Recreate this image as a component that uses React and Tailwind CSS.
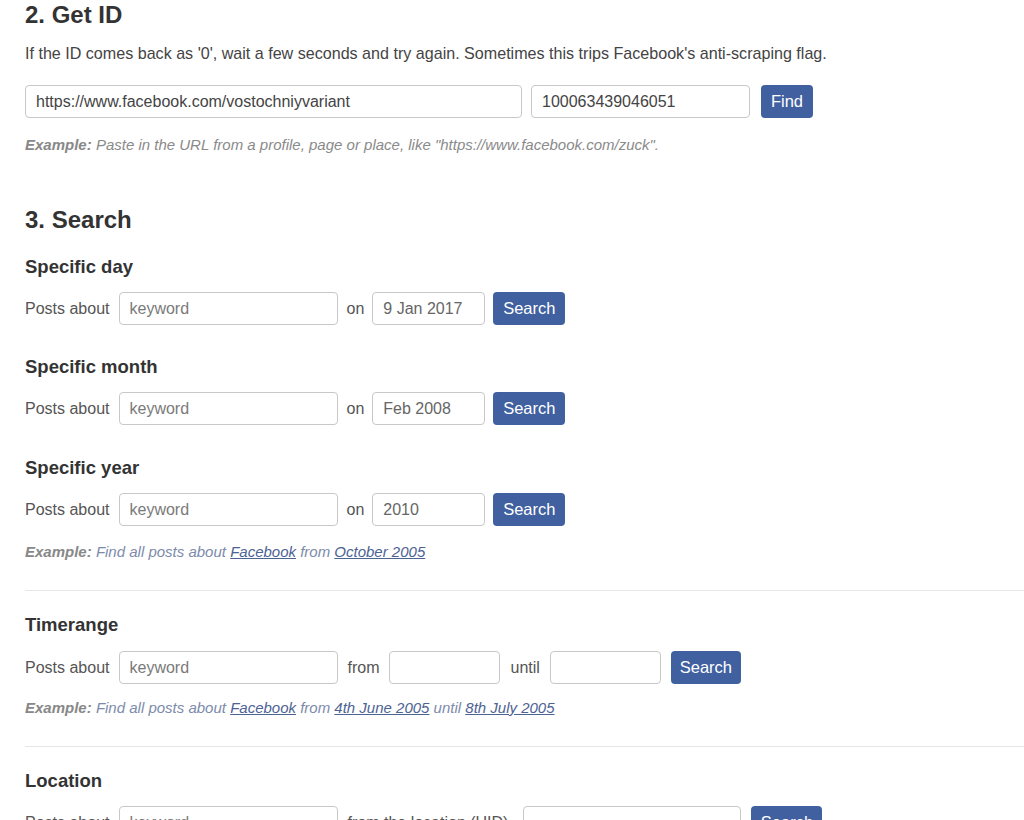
const font = { fontFamily: '"Liberation Sans", Arial, sans-serif' }

function Field({ value, placeholder, width, tone = 'text-[#444]' }) {
  return (
    <div
      className={`h-[33px] ${width} border border-[#c8c8c8] rounded-[4px] bg-white flex items-center px-[10px] text-[16px] ${
        value ? tone : 'text-[#7a7a7a]'
      }`}
    >
      {value || placeholder}
    </div>
  )
}

function Button({ label, width }) {
  return (
    <div
      className={`h-[33px] ${width} rounded-[4px] bg-[#41609f] text-white text-[16.5px] flex items-center justify-center`}
    >
      {label}
    </div>
  )
}

function Label({ children, className = '' }) {
  return <span className={`text-[16px] text-[#555] ${className}`}>{children}</span>
}

function SubHeading({ children, className = '' }) {
  return (
    <h4 className={`text-[18.5px] leading-[22px] font-bold text-[#333] ${className}`}>{children}</h4>
  )
}

function Link({ children }) {
  return <span className="underline text-[#4d6394]">{children}</span>
}

function Example({ children, className = '', tone = 'text-[#7d8bab]' }) {
  return (
    <p className={`text-[15px] leading-[20px] italic ${tone} ${className}`}>
      <span className="font-bold text-[#888]">Example:</span> {children}
    </p>
  )
}

function SearchRow({ dateValue, className = '' }) {
  return (
    <div className={`flex items-center ${className}`}>
      <Label>Posts about</Label>
      <div className="ml-[9px]">
        <Field placeholder="keyword" width="w-[219px]" />
      </div>
      <Label className="ml-[9px]">on</Label>
      <div className="ml-[8px]">
        <Field value={dateValue} width="w-[113px]" tone="text-[#666]" />
      </div>
      <div className="ml-[8px]">
        <Button label="Search" width="w-[72px]" />
      </div>
    </div>
  )
}

export default function App() {
  return (
    <div className="w-[1024px] h-[820px] overflow-hidden bg-white pl-[25px]" style={font}>
      <h2 className="text-[24px] leading-[29px] font-bold text-[#333]">2. Get ID</h2>
      <p className="mt-[14px] text-[16.1px] leading-[20px] text-[#444]">
        If the ID comes back as '0', wait a few seconds and try again. Sometimes this trips
        Facebook's anti-scraping flag.
      </p>
      <div className="mt-[22px] flex items-center">
        <Field value="https://www.facebook.com/vostochniyvariant" width="w-[497px]" />
        <div className="ml-[9px]">
          <Field value="100063439046051" width="w-[219px]" />
        </div>
        <div className="ml-[11px]">
          <Button label="Find" width="w-[52px]" />
        </div>
      </div>
      <Example className="mt-[17px]" tone="text-[#8a8a8a]">
        Paste in the URL from a profile, page or place, like "https://www.facebook.com/zuck".
      </Example>

      <h2 className="mt-[50px] text-[24px] leading-[29px] font-bold text-[#333]">3. Search</h2>

      <SubHeading className="mt-[22px]">Specific day</SubHeading>
      <SearchRow dateValue="9 Jan 2017" className="mt-[14px]" />

      <SubHeading className="mt-[31px]">Specific month</SubHeading>
      <SearchRow dateValue="Feb 2008" className="mt-[14px]" />

      <SubHeading className="mt-[32px]">Specific year</SubHeading>
      <SearchRow dateValue="2010" className="mt-[14px]" />
      <Example className="mt-[16px]">
        Find all posts about <Link>Facebook</Link> from <Link>October 2005</Link>
      </Example>

      <div className="mt-[28px] border-t border-[#e6e6e6]" />

      <SubHeading className="mt-[23px]">Timerange</SubHeading>
      <div className="mt-[15px] flex items-center">
        <Label>Posts about</Label>
        <div className="ml-[9px]">
          <Field placeholder="keyword" width="w-[219px]" />
        </div>
        <Label className="ml-[10px]">from</Label>
        <div className="ml-[9px]">
          <Field width="w-[111px]" />
        </div>
        <Label className="ml-[11px]">until</Label>
        <div className="ml-[10px]">
          <Field width="w-[111px]" />
        </div>
        <div className="ml-[10px]">
          <Button label="Search" width="w-[70px]" />
        </div>
      </div>
      <Example className="mt-[14px]">
        Find all posts about <Link>Facebook</Link> from <Link>4th June 2005</Link> until{' '}
        <Link>8th July 2005</Link>
      </Example>

      <div className="mt-[28px] border-t border-[#e6e6e6]" />

      <SubHeading className="mt-[23px]">Location</SubHeading>
      <div className="mt-[14px] flex items-center">
        <Label>Posts about</Label>
        <div className="ml-[9px]">
          <Field placeholder="keyword" width="w-[219px]" />
        </div>
        <Label className="ml-[10px]">from the location (UID)</Label>
        <div className="ml-[15px]">
          <Field width="w-[218px]" />
        </div>
        <div className="ml-[10px]">
          <Button label="Search" width="w-[71px]" />
        </div>
      </div>
    </div>
  )
}
